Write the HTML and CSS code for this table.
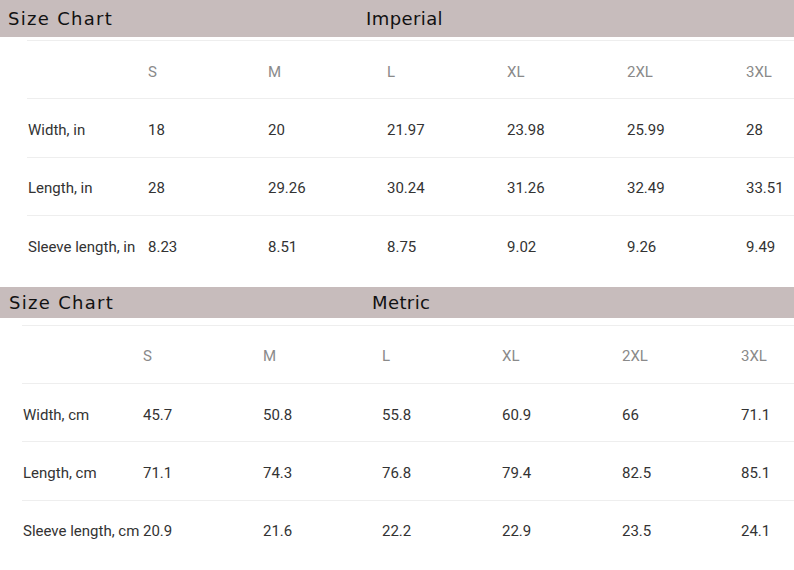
FILE: index.html
```html
<!DOCTYPE html>
<html>
<head>
<meta charset="utf-8">
<link rel="stylesheet" href="styles.css">
</head>
<body>
<section class="chart chart-imperial">
  <div class="bar">
    <span class="bar-label">Size Chart</span>
    <span class="bar-title">Imperial</span>
  </div>
  <div class="table">
    <div class="row head"><span></span><span>S</span><span>M</span><span>L</span><span>XL</span><span>2XL</span><span>3XL</span></div>
    <div class="row"><span>Width, in</span><span>18</span><span>20</span><span>21.97</span><span>23.98</span><span>25.99</span><span>28</span></div>
    <div class="row"><span>Length, in</span><span>28</span><span>29.26</span><span>30.24</span><span>31.26</span><span>32.49</span><span>33.51</span></div>
    <div class="row"><span>Sleeve length, in</span><span>8.23</span><span>8.51</span><span>8.75</span><span>9.02</span><span>9.26</span><span>9.49</span></div>
  </div>
</section>
<section class="chart chart-metric">
  <div class="bar">
    <span class="bar-label">Size Chart</span>
    <span class="bar-title">Metric</span>
  </div>
  <div class="table">
    <div class="row head"><span></span><span>S</span><span>M</span><span>L</span><span>XL</span><span>2XL</span><span>3XL</span></div>
    <div class="row"><span>Width, cm</span><span>45.7</span><span>50.8</span><span>55.8</span><span>60.9</span><span>66</span><span>71.1</span></div>
    <div class="row"><span>Length, cm</span><span>71.1</span><span>74.3</span><span>76.8</span><span>79.4</span><span>82.5</span><span>85.1</span></div>
    <div class="row"><span>Sleeve length, cm</span><span>20.9</span><span>21.6</span><span>22.2</span><span>22.9</span><span>23.5</span><span>24.1</span></div>
  </div>
</section>
</body>
</html>
```
FILE: styles.css
```css
html, body {
  margin: 0;
  padding: 0;
  background: #ffffff;
}
body {
  width: 794px;
  height: 570px;
  overflow: hidden;
  font-family: Roboto, "Liberation Sans", sans-serif;
}
.bar {
  display: flex;
  align-items: center;
  background: #c7bcbc;
  color: #111;
  font-family: "DejaVu Sans", sans-serif;
  font-size: 18px;
}
.bar-label { letter-spacing: 1.3px; }
.bar-title { letter-spacing: 0.4px; }
.chart-imperial .bar {
  height: 37px;
  padding-left: 8px;
}
.chart-metric .bar {
  height: 31px;
  padding-left: 9px;
  margin-top: 13px;
}
.chart-imperial .bar-label { width: 358px; }
.chart-metric .bar-label { width: 363px; }
.table {
  display: flex;
  flex-direction: column;
}
.chart-imperial .table { margin: 3px 0 0 27px; }
.chart-metric .table { margin: 7px 0 0 22px; }
.row {
  display: grid;
  grid-template-columns: 120px 120px 119px 120px 120px 119px 1fr;
  align-items: center;
  height: 58.4px;
  box-sizing: border-box;
  border-top: 1px solid #eeeeee;
  padding-top: 4px;
  font-size: 15px;
  color: #333333;
}
.row > span { padding-left: 1px; white-space: nowrap; }
.row.head { color: #8a8a8a; }
```
